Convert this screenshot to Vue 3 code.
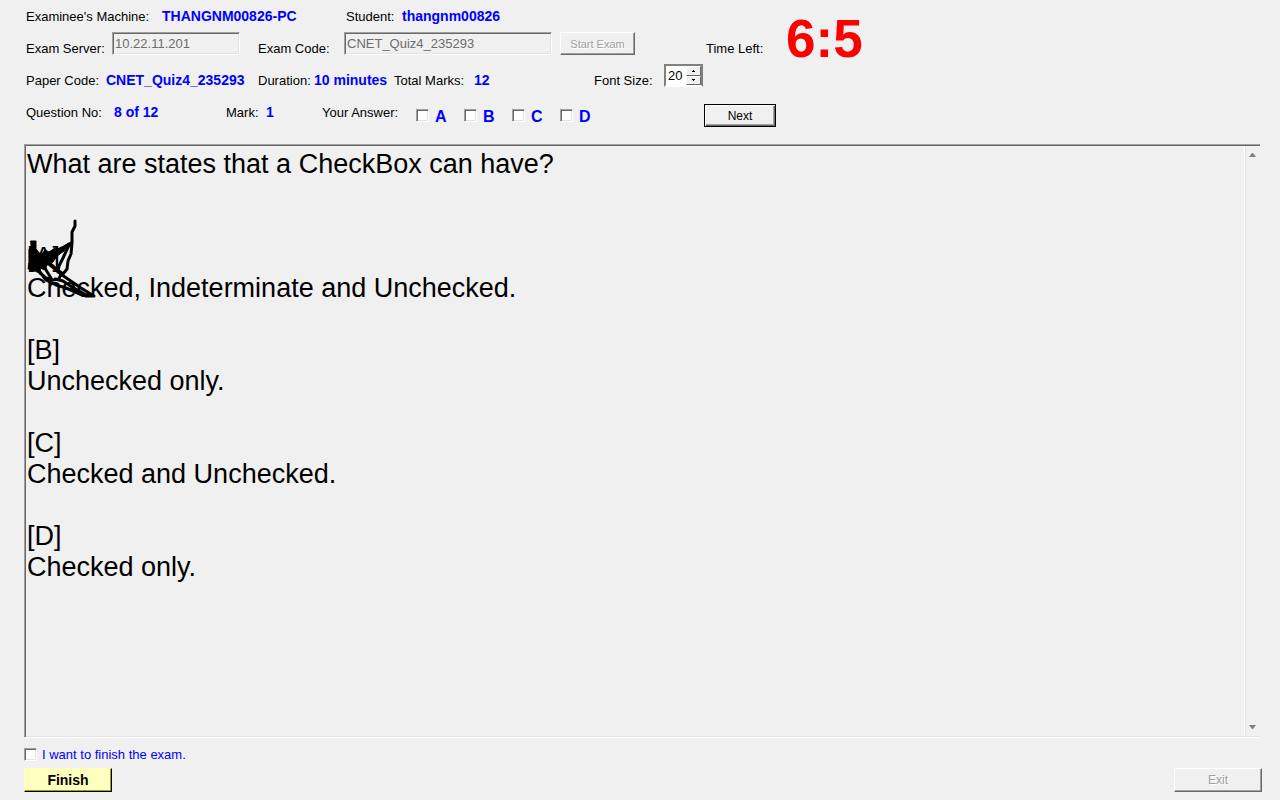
<script setup>
import { ref } from 'vue'

const server = ref('10.22.11.201')
const examCode = ref('CNET_Quiz4_235293')
const fontSize = ref(20)
const options = ['A', 'B', 'C', 'D']
const answers = ref([])
const wantsFinish = ref(false)
const choices = [
  { key: 'A', text: 'Checked, Indeterminate and Unchecked.' },
  { key: 'B', text: 'Unchecked only.' },
  { key: 'C', text: 'Checked and Unchecked.' },
  { key: 'D', text: 'Checked only.' }
]
</script>

<template>
  <main class="exam">
    <header class="info">
      <div class="row row-machine">
        <span>Examinee's Machine:</span><strong>THANGNM00826-PC</strong>
        <span>Student:</span><strong>thangnm00826</strong>
      </div>
      <div class="row row-server">
        <label for="server">Exam Server:</label>
        <input id="server" v-model="server" class="field field-server" type="text" disabled />
        <label for="code">Exam Code:</label>
        <input id="code" v-model="examCode" class="field field-code" type="text" disabled />
        <button class="btn btn-start" type="button" disabled>Start Exam</button>
        <span>Time Left:</span><span class="timer">6:5</span>
      </div>
      <div class="row row-paper">
        <span>Paper Code:</span><strong>CNET_Quiz4_235293</strong>
        <span>Duration:</span><strong>10 minutes</strong>
        <span>Total Marks:</span><strong>12</strong>
        <label for="size">Font Size:</label>
        <div class="spinner">
          <input id="size" v-model.number="fontSize" type="text" />
          <div class="steps">
            <button type="button" aria-label="Increase font size" @click="fontSize++">
              <svg viewBox="0 0 3 2"><path d="M1 0h1v1h1v1H0V1h1z" /></svg>
            </button>
            <button type="button" aria-label="Decrease font size" @click="fontSize--">
              <svg viewBox="0 0 3 2"><path d="M0 0h3v1H2v1H1V1H0z" /></svg>
            </button>
          </div>
        </div>
      </div>
      <div class="row row-question">
        <span>Question No:</span><strong>8 of 12</strong>
        <span>Mark:</span><strong>1</strong>
        <span>Your Answer:</span>
        <div class="options">
          <label v-for="o in options" :key="o" class="option">
            <input v-model="answers" type="checkbox" class="check" :value="o" />
            <span>{{ o }}</span>
          </label>
        </div>
        <button class="btn btn-next" type="button">Next</button>
      </div>
    </header>

    <section class="paper">
      <div class="question">
        <p class="prompt">What are states that a CheckBox can have?</p>
        <div v-for="c in choices" :key="c.key" class="choice">
          <p>[{{ c.key }}]</p>
          <p>{{ c.text }}</p>
        </div>
        <svg class="ink" viewBox="0 0 76 84" aria-hidden="true">
          <path class="blot" d="M7 25h5v8l5 6 4-5 4 2 6-4 4 1 10-6-5 8-7 5-4 6-5 2-4 6-3-2-2 5-4-2-4-1-2-7-1 6H5V33h2z" />
          <path d="M51 5v5l-3 6v11l-1 11-3 7-1 8-4 5-4-3M47 27l-7 4-9 4-5 5M45 29l-6 13-4 8-1 6M14 48l2 9 6 5 7 2 6-1 2-5-8-8-7-5-3 1 3 8 5 8M16 56l6 8 10 5 10 3 14 6 6 2h8L57 72 38 59 25 48M31 63l8 2 9 6 9 5 5 3" />
        </svg>
      </div>
      <div class="scroll" aria-hidden="true">
        <svg viewBox="0 0 7 4"><path d="M3 0h1l3 4H0z" /></svg>
        <svg viewBox="0 0 7 4"><path d="M0 0h7L4 4H3z" /></svg>
      </div>
    </section>

    <footer class="foot">
      <label class="confirm">
        <input v-model="wantsFinish" type="checkbox" class="check" />
        <span>I want to finish the exam.</span>
      </label>
      <div class="actions">
        <button class="btn btn-finish" type="button">Finish</button>
        <button class="btn btn-exit" type="button" disabled>Exit</button>
      </div>
    </footer>
  </main>
</template>

<style>
body {
  background: #f0f0f0;
}
</style>

<style scoped>
.exam {
  display: flex;
  flex-direction: column;
  box-sizing: border-box;
  min-height: 100vh;
  padding-bottom: 8px;
  background: #f0f0f0;
  color: #000;
  font: 13px/16px "Liberation Sans", Arial, sans-serif;
}
.info {
  padding: 0 0 16px 26px;
}
.row {
  display: grid;
  align-items: start;
  height: 32px;
  line-height: 34px;
  white-space: nowrap;
}
.row strong {
  color: #00f;
  font-size: 14px;
  line-height: 32px;
}
.row-machine {
  grid-template-columns: 136px 184px 56px auto;
}
.row-server {
  grid-template-columns: 86px 146px 86px 216px 146px 80px auto;
}
.row-paper {
  grid-template-columns: 80px 152px 56px 80px 80px 120px 70px auto;
}
.row-question {
  grid-template-columns: 88px 112px 40px 56px 94px 288px auto;
}
button,
input {
  box-sizing: border-box;
  margin: 0;
  font-family: inherit;
}
.field {
  height: 23px;
  padding: 0 0 0 2px;
  border: 1px solid;
  border-color: #a0a0a0 #fff #fff #a0a0a0;
  border-radius: 0;
  background: #f0f0f0;
  box-shadow: inset 1px 1px #696969, inset -1px -1px #e3e3e3;
  color: #6d6d6d;
  font-size: 13px;
}
.field-server {
  width: 128px;
}
.field-code {
  width: 208px;
}
.btn {
  height: 24px;
  padding: 0;
  border: 1px solid;
  border-color: #fff #696969 #696969 #fff;
  border-radius: 0;
  background: #f0f0f0;
  box-shadow: inset -1px -1px #a0a0a0;
  color: #000;
  font-size: 12px;
}
.btn:disabled {
  color: #a0a0a0;
  text-shadow: 1px 1px #fff;
}
.btn-start {
  width: 75px;
  height: 23px;
  font-size: 11px;
}
.btn-next {
  width: 72px;
  height: 23px;
  margin-top: 8px;
  border-color: #000;
  box-shadow: inset 1px 1px #fff, inset -1px -1px #696969, inset -2px -2px #a0a0a0;
}
.timer {
  color: #f00;
  font-size: 53px;
  font-weight: bold;
  line-height: 14px;
}
.spinner {
  display: flex;
  box-sizing: border-box;
  width: 39px;
  height: 23px;
  border: 2px solid;
  border-color: #808080 #808080 #fff #808080;
  background: #fff;
}
.spinner input {
  width: 20px;
  height: 19px;
  padding: 0 0 0 2px;
  border: 0;
  background: #fff;
  font-size: 13px;
}
.steps {
  display: flex;
  flex-direction: column;
  width: 15px;
}
.steps button {
  display: flex;
  align-items: center;
  justify-content: center;
  flex: 1;
  min-height: 0;
  padding: 0;
  border: 1px solid;
  border-color: #fff #696969 #696969 #fff;
  background: #f0f0f0;
}
.steps svg {
  width: 3px;
  height: 2px;
}
.options {
  display: grid;
  grid-template-columns: repeat(4, 48px);
  padding-top: 13px;
}
.option {
  display: flex;
  gap: 6px;
  color: #00f;
  font-size: 16px;
  font-weight: bold;
  line-height: 15px;
}
.check {
  flex: none;
  width: 13px;
  height: 13px;
  appearance: none;
  border: 1px solid;
  border-color: #a0a0a0 #fff #fff #a0a0a0;
  background: #fff;
  box-shadow: inset 1px 1px #696969, inset -1px -1px #e3e3e3;
}
.check:checked {
  background: #00f;
}
.paper {
  display: flex;
  flex: 1;
  margin: 0 20px 0 24px;
  border: 0 solid;
  border-width: 1px 0 1px 1px;
  border-color: #a0a0a0 #fff #fff #a0a0a0;
  box-shadow: inset 1px 1px #696969, inset 0 -1px #e3e3e3;
}
.question {
  position: relative;
  flex: 1;
  padding: 4px 2px;
  font-size: 27px;
  line-height: 31px;
}
.question p {
  margin: 0;
}
.prompt {
  padding-bottom: 62px;
}
.choice {
  padding-bottom: 31px;
}
.ink {
  position: absolute;
  left: -1px;
  top: 71px;
  width: 76px;
  height: 84px;
  fill: none;
  stroke: #000;
  stroke-width: 3;
  stroke-linecap: round;
  stroke-linejoin: round;
}
.blot {
  fill: #000;
  stroke-width: 1;
}
.scroll {
  display: flex;
  flex-direction: column;
  justify-content: space-between;
  align-items: center;
  width: 15px;
  margin: 1px 0;
  padding: 7px 0;
  border-left: 1px solid #fff;
  box-shadow: inset 1px 0 #e3e3e3;
}
.scroll svg {
  width: 7px;
  height: 4px;
  fill: #808080;
}
.foot {
  padding: 8px 18px 0 24px;
}
.confirm {
  display: flex;
  align-items: center;
  gap: 5px;
  width: max-content;
  color: #00f;
}
.confirm span {
  padding-top: 1px;
}
.actions {
  display: flex;
  justify-content: space-between;
  padding-top: 5px;
}
.btn-finish,
.btn-exit {
  width: 88px;
}
.btn-finish {
  border-color: #ffffc0 #000 #000 #ffffc0;
  background: #ffffc0;
  box-shadow: inset -1px -1px #a0a000;
  font-size: 14px;
  font-weight: bold;
}
</style>
